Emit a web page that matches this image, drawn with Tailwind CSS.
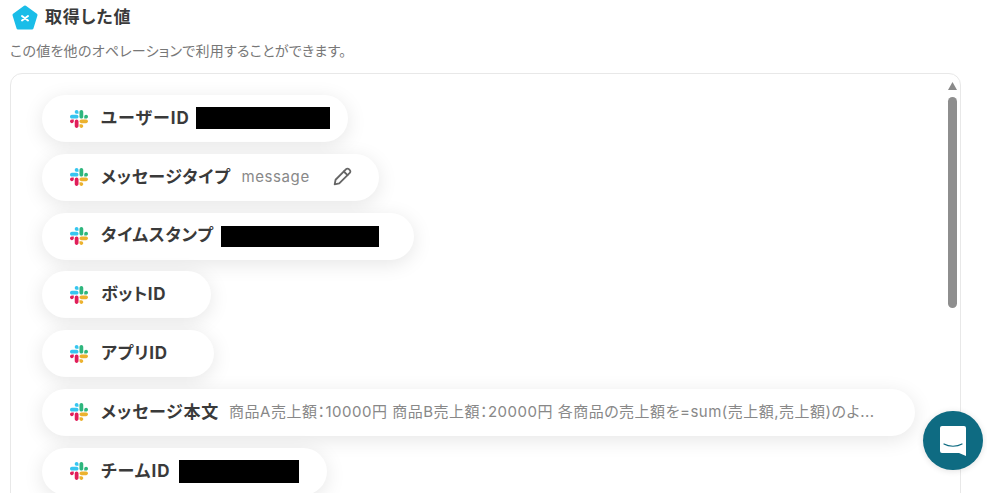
<!DOCTYPE html>
<html lang="ja">
<head>
  <meta charset="UTF-8">
  <title>取得した値</title>
  <script src="https://cdn.jsdelivr.net/npm/@tailwindcss/browser@4"></script>
</head>
<body class="bg-white h-[493px] overflow-hidden relative font-['Inter','Noto_Sans_CJK_JP',sans-serif] [font-feature-settings:'palt'] text-[#3a3a3a]">
  <svg class="hidden">
    <symbol id="slack" viewBox="0 0 122.8 122.8">
      <path fill="#E01E5A" d="M25.8 77.6c0 7.1-5.8 12.9-12.9 12.9S0 84.7 0 77.6s5.8-12.9 12.9-12.9h12.9v12.9zm6.5 0c0-7.1 5.8-12.9 12.9-12.9s12.9 5.8 12.9 12.9v32.3c0 7.1-5.8 12.9-12.9 12.9s-12.9-5.8-12.9-12.9V77.6z"/>
      <path fill="#36C5F0" d="M45.2 25.8c-7.1 0-12.9-5.8-12.9-12.9S38.1 0 45.2 0s12.9 5.8 12.9 12.9v12.9H45.2zm0 6.5c7.1 0 12.9 5.8 12.9 12.9s-5.8 12.9-12.9 12.9H12.9C5.8 58.1 0 52.3 0 45.2s5.8-12.9 12.9-12.9h32.3z"/>
      <path fill="#2EB67D" d="M97 45.2c0-7.1 5.8-12.9 12.9-12.9s12.9 5.8 12.9 12.9-5.8 12.9-12.9 12.9H97V45.2zm-6.5 0c0 7.1-5.8 12.9-12.9 12.9s-12.9-5.8-12.9-12.9V12.9C64.7 5.8 70.5 0 77.6 0s12.9 5.8 12.9 12.9v32.3z"/>
      <path fill="#ECB22E" d="M77.6 97c7.1 0 12.9 5.8 12.9 12.9s-5.8 12.9-12.9 12.9-12.9-5.8-12.9-12.9V97h12.9zm0-6.5c-7.1 0-12.9-5.8-12.9-12.9s5.8-12.9 12.9-12.9h32.3c7.1 0 12.9 5.8 12.9 12.9s-5.8 12.9-12.9 12.9H77.6z"/>
    </symbol>
  </svg>

  <!-- Heading -->
  <div class="flex items-center gap-[7px] pl-[12px] pt-[5px] h-[30px]">
    <svg class="w-[26px] h-[25px]" viewBox="0 0 26 25">
      <path fill="#1ABDE8" stroke="#1ABDE8" stroke-width="3" stroke-linejoin="round" d="M13 2 24 10 20 23H6L2 10Z"/>
      <path fill="none" stroke="#fff" stroke-width="2" stroke-linecap="round" d="M10 11 16 15.500M16 11 10 15.500"/>
    </svg>
    <h2 class="text-[17px] font-bold leading-none tracking-[0.8px]">取得した値</h2>
  </div>
  <p class="pl-[10px] mt-[11px] text-[14px] leading-[19px] tracking-[0.27px] text-[#777]">この値を他のオペレーションで利用することができます。</p>

  <!-- Output list -->
  <div class="ml-[10px] mt-[13px] w-[951px] h-[440px] border border-[#e8e8e8] rounded-[12px] pl-[31px] pt-[21px] flex flex-col items-start gap-[11.8px]">
    <div class="h-[47px] w-[306px] rounded-full bg-white shadow-[0_4px_20px_rgba(0,0,0,0.1)] flex items-center pl-[28px] shrink-0">
      <svg class="w-[18px] h-[18px] shrink-0"><use href="#slack"/></svg>
      <span class="ml-[13px] text-[17px] font-bold tracking-[1px] whitespace-nowrap">ユーザーID</span>
      <span class="ml-[6px] mb-[1px] w-[134px] h-[22px] bg-black"></span>
    </div>
    <div class="h-[47px] w-[337px] rounded-full bg-white shadow-[0_4px_20px_rgba(0,0,0,0.1)] flex items-center pl-[28px] shrink-0">
      <svg class="w-[18px] h-[18px] shrink-0"><use href="#slack"/></svg>
      <span class="ml-[13px] text-[17px] font-bold tracking-[0.6px] whitespace-nowrap">メッセージタイプ</span>
      <span class="ml-[11px] text-[15px] tracking-[0.6px] text-[#888]">message</span>
      <svg class="ml-[21px] w-[22px] h-[22px] text-[#666]" viewBox="0 0 24 24" fill="none" stroke="currentColor" stroke-width="2" stroke-linecap="round" stroke-linejoin="round">
        <path d="M4 20l1-5L16.500 3.500a2.100 2.100 0 0 1 3 0l1 1a2.100 2.100 0 0 1 0 3L9 19l-5 1z"/>
        <path d="M14 6l4 4"/>
      </svg>
    </div>
    <div class="h-[47px] w-[372px] rounded-full bg-white shadow-[0_4px_20px_rgba(0,0,0,0.1)] flex items-center pl-[28px] shrink-0">
      <svg class="w-[18px] h-[18px] shrink-0"><use href="#slack"/></svg>
      <span class="ml-[13px] text-[17px] font-bold tracking-[0.6px] whitespace-nowrap">タイムスタンプ</span>
      <span class="ml-[7px] w-[158px] h-[21px] bg-black"></span>
    </div>
    <div class="h-[47px] w-[169px] rounded-full bg-white shadow-[0_4px_20px_rgba(0,0,0,0.1)] flex items-center pl-[28px] shrink-0">
      <svg class="w-[18px] h-[18px] shrink-0"><use href="#slack"/></svg>
      <span class="ml-[13px] text-[17px] font-bold tracking-[0.5px] whitespace-nowrap">ボットID</span>
    </div>
    <div class="h-[47px] w-[172px] rounded-full bg-white shadow-[0_4px_20px_rgba(0,0,0,0.1)] flex items-center pl-[28px] shrink-0">
      <svg class="w-[18px] h-[18px] shrink-0"><use href="#slack"/></svg>
      <span class="ml-[13px] text-[17px] font-bold tracking-[0.7px] whitespace-nowrap">アプリID</span>
    </div>
    <div class="h-[47px] w-[873px] rounded-full bg-white shadow-[0_4px_20px_rgba(0,0,0,0.1)] flex items-center pl-[28px] shrink-0">
      <svg class="w-[18px] h-[18px] shrink-0"><use href="#slack"/></svg>
      <span class="ml-[13px] text-[17px] font-bold tracking-[0.8px] whitespace-nowrap">メッセージ本文</span>
      <span class="ml-[10px] text-[15px] tracking-[0.5px] text-[#888] whitespace-nowrap">商品A売上額：10000円 商品B売上額：20000円 各商品の売上額を=sum(売上額,売上額)のよ...</span>
    </div>
    <div class="h-[47px] w-[285px] rounded-full bg-white shadow-[0_4px_20px_rgba(0,0,0,0.1)] flex items-center pl-[28px] shrink-0">
      <svg class="w-[18px] h-[18px] shrink-0"><use href="#slack"/></svg>
      <span class="ml-[13px] text-[17px] font-bold tracking-[1px] whitespace-nowrap">チームID</span>
      <span class="ml-[9px] w-[120px] h-[23px] bg-black"></span>
    </div>
  </div>

  <!-- Scrollbar -->
  <div class="absolute left-[948px] top-[82px] w-[9px] h-[411px] bg-white">
    <svg class="block w-[9px] h-[8px]" viewBox="0 0 9 8"><path fill="#8a8a8a" d="M4.500 0 9 8H0Z"/></svg>
    <div class="mt-[7px] h-[211px] rounded-full bg-[#8e8e8e]"></div>
  </div>

  <!-- Chat launcher -->
  <div class="absolute left-[923px] top-[411px] w-[60px] h-[59px] rounded-full bg-[#0e6b82] shadow-[0_1px_6px_rgba(0,0,0,0.12)] flex items-center justify-center">
    <svg class="w-[26px] h-[30px]" viewBox="0 0 26 30">
      <path fill="#fff" d="M2 0h22a2 2 0 0 1 2 2v28l-7-3H2a2 2 0 0 1-2-2V2a2 2 0 0 1 2-2z"/>
      <path fill="none" stroke="#0e6b82" stroke-width="1.2" stroke-linecap="round" d="M4 18c5 3 13 3 18 0"/>
    </svg>
  </div>
</body>
</html>
